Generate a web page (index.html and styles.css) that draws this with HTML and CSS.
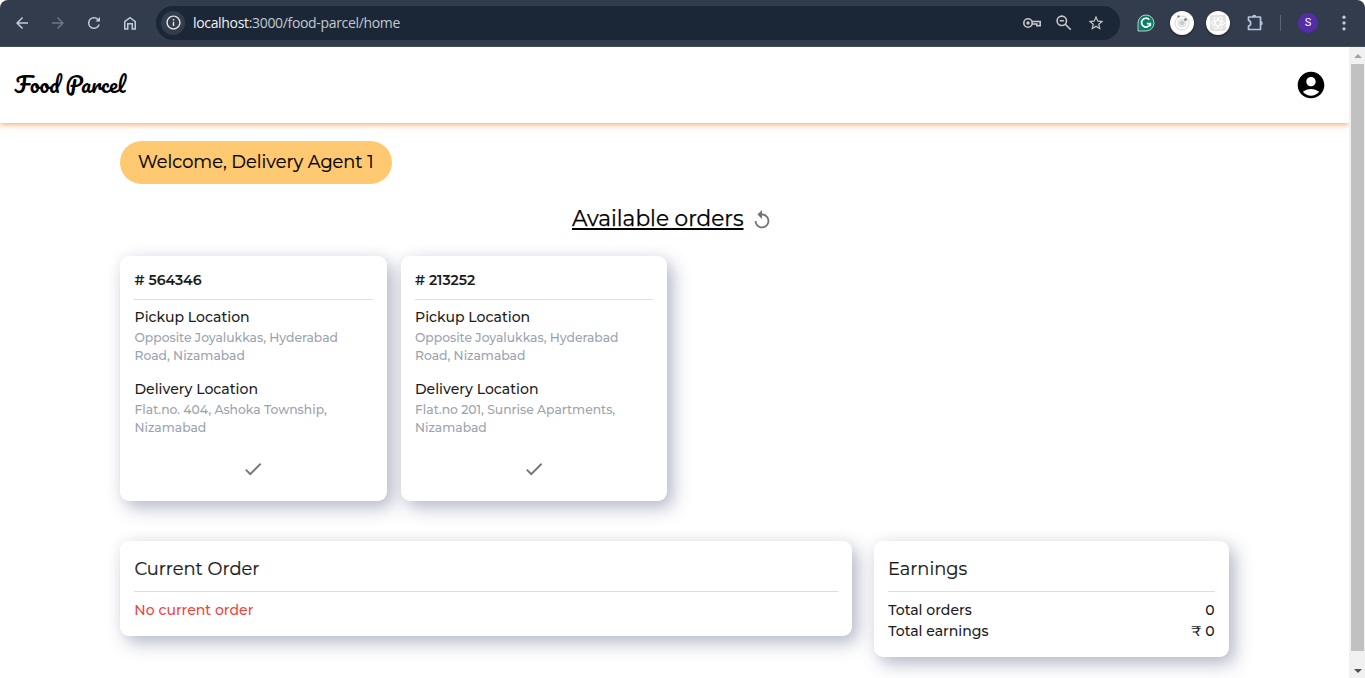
FILE: index.html
```html
<!DOCTYPE html>
<html lang="en">
<head>
<meta charset="utf-8">
<title>Food Parcel</title>
<link rel="stylesheet" href="styles.css">
</head>
<body>
<div class="toolbar">
  <nav class="nav-icons">
    <svg viewBox="0 0 24 24"><path d="M20 11H7.83l5.59-5.59L12 4l-8 8 8 8 1.41-1.41L7.83 13H20z"/></svg>
    <svg class="dim" viewBox="0 0 24 24"><path d="M12 4l-1.41 1.41L16.17 11H4v2h12.17l-5.58 5.59L12 20l8-8z"/></svg>
    <svg viewBox="0 0 24 24"><path d="M17.65 6.35A7.96 7.96 0 0 0 12 4a8 8 0 1 0 7.73 10h-2.08A6 6 0 1 1 12 6c1.66 0 3.14.69 4.22 1.78L14 10h6V4z"/></svg>
    <svg viewBox="0 0 24 24"><path d="M4 21V9.5L12 3.5l8 6V21h-6v-7h-4v7zM6 19h2v-7h8v7h2v-8.500L12 6l-6 4.500z"/></svg>
  </nav>
  <div class="address">
    <span class="info"><svg viewBox="0 0 24 24"><path d="M11 7h2v2h-2zm0 4h2v6h-2zm1-9C6.480 2 2 6.480 2 12s4.480 10 10 10 10-4.480 10-10S17.520 2 12 2zm0 18c-4.410 0-8-3.590-8-8s3.590-8 8-8 8 3.590 8 8-3.590 8-8 8z"/></svg></span>
    <span class="url"><b>localhost</b>:3000/food-parcel/home</span>
    <span class="address-icons">
      <svg viewBox="0 0 20 20" class="line"><circle cx="6" cy="10" r="4.200"/><circle class="dot" cx="6" cy="10" r="1.700"/><path d="M10 8.500h8.200v4.200h-3.400v-1.700H10"/></svg>
      <svg viewBox="0 0 20 20" class="line"><circle cx="7.800" cy="7.800" r="4.700"/><path d="M11.300 11.300l5.500 5.500M5.700 7.800h4.200"/></svg>
      <svg viewBox="0 0 24 24"><path d="M22 9.240l-7.190-.62L12 2 9.190 8.630 2 9.240l5.460 4.730L5.820 21 12 17.270 18.180 21l-1.630-7.030zM12 15.400l-3.760 2.270 1-4.280-3.320-2.880 4.380-.38L12 6.100l1.710 4.040 4.380.38-3.320 2.880 1 4.280z"/></svg>
    </span>
  </div>
  <div class="extensions">
    <svg class="grammar" viewBox="0 0 18 18"><path class="leaf" d="M1 17V9a8 8 0 1 1 8 8z"/><path class="g" d="M12.300 5.700A4.400 4.400 0 1 0 13.300 9.600H9.800M13.300 9.600v2.700"/></svg>
    <span class="disc"><svg viewBox="0 0 24 24" class="orbit"><circle cx="12" cy="12" r="7"/><circle cx="12" cy="12" r="4"/><circle class="core" cx="12" cy="12" r="2.300"/><circle class="moon" cx="8.500" cy="5.500" r="1.200"/><circle class="moon" cx="15.500" cy="8.500" r="1.500"/></svg></span>
    <span class="disc"><svg viewBox="0 0 24 24" class="atom"><rect x="4" y="4" width="16" height="16" rx="2"/><ellipse cx="12" cy="12" rx="6.500" ry="2.600"/><ellipse cx="12" cy="12" rx="6.500" ry="2.600" transform="rotate(60 12 12)"/><ellipse cx="12" cy="12" rx="6.500" ry="2.600" transform="rotate(120 12 12)"/></svg></span>
    <svg class="puzzle" viewBox="0 0 20 20"><path class="tab" d="M7 4a2.200 2.200 0 0 1 4.400 0zM15.500 8a2.200 2.200 0 0 1 0 4.400z"/><path d="M3.500 4h12v12.500h-12v-3.300c2.900-.6 2.900-5.300 0-5.900z"/></svg>
    <span class="separator"></span>
    <span class="profile">S</span>
    <svg class="more" viewBox="0 0 24 24"><circle cx="12" cy="5" r="2"/><circle cx="12" cy="12" r="2"/><circle cx="12" cy="19" r="2"/></svg>
  </div>
</div>
<div class="viewport">
  <div class="page">
    <header class="header">
      <div class="logo">Food Parcel</div>
      <svg class="account" viewBox="0 0 24 24"><path d="M12 2C6.480 2 2 6.480 2 12s4.480 10 10 10 10-4.480 10-10S17.520 2 12 2zm0 4c1.930 0 3.500 1.570 3.500 3.500S13.930 13 12 13s-3.500-1.570-3.500-3.500S10.070 6 12 6zm0 14c-2.030 0-4.430-.82-6.140-2.880C7.550 15.800 9.680 15 12 15s4.450.8 6.140 2.120C16.430 19.180 14.030 20 12 20z"/></svg>
    </header>
    <main class="content">
      <div class="welcome">Welcome, Delivery Agent 1</div>
      <div class="heading">
        <h1>Available orders</h1>
        <svg viewBox="0 0 24 24"><path d="M12 5V1L7 6l5 5V7c3.310 0 6 2.690 6 6s-2.690 6-6 6-6-2.690-6-6H4c0 4.420 3.580 8 8 8s8-3.580 8-8-3.580-8-8-8z"/></svg>
      </div>
      <section class="orders">
        <article class="card order">
          <h2># 564346</h2>
          <h3>Pickup Location</h3>
          <p>Opposite Joyalukkas, Hyderabad<br>Road, Nizamabad</p>
          <h3>Delivery Location</h3>
          <p>Flat.no. 404, Ashoka Township,<br>Nizamabad</p>
          <svg class="check" viewBox="0 0 24 24"><path d="M9 16.170 4.830 12l-1.420 1.410L9 19 21 7l-1.410-1.410z"/></svg>
        </article>
        <article class="card order">
          <h2># 213252</h2>
          <h3>Pickup Location</h3>
          <p>Opposite Joyalukkas, Hyderabad<br>Road, Nizamabad</p>
          <h3>Delivery Location</h3>
          <p>Flat.no 201, Sunrise Apartments,<br>Nizamabad</p>
          <svg class="check" viewBox="0 0 24 24"><path d="M9 16.170 4.830 12l-1.420 1.410L9 19 21 7l-1.410-1.410z"/></svg>
        </article>
      </section>
      <section class="summary">
        <article class="card panel">
          <h2>Current Order</h2>
          <div class="row empty">No current order</div>
        </article>
        <article class="card panel">
          <h2>Earnings</h2>
          <div class="row"><span>Total orders</span><span>0</span></div>
          <div class="row"><span>Total earnings</span><span>₹ 0</span></div>
        </article>
      </section>
    </main>
  </div>
  <div class="scrollbar"><i class="up"></i><i class="thumb"></i><i class="down"></i></div>
</div>
</body>
</html>
```

FILE: styles.css
```css
* { box-sizing: border-box; }
body { margin: 0; height: 678px; overflow: hidden; background: #fff; font-family: Montserrat, Inter, "Liberation Sans", sans-serif; font-weight: 400; color: #1c1c1c; }
h1, h2, h3, p { margin: 0; font-weight: 400; white-space: nowrap; }
svg { display: block; flex: none; }

/* Browser toolbar */
.toolbar { height: 47px; display: flex; align-items: center; padding: 0 11px 1px 12px; background: #323c4d; border-bottom: 1px solid #434c58; border-radius: 8px 8px 0 0; }
.nav-icons { display: flex; gap: 18px; padding-left: 1px; }
.nav-icons svg { width: 18px; height: 18px; fill: #c0cbdd; }
.nav-icons .dim { fill: #6c7687; }
.address { width: 964px; flex: none; height: 34px; margin-left: 17px; padding: 0 14px 0 5px; display: flex; align-items: center; border-radius: 17px; background: #1b2736; }
.info { width: 24px; height: 24px; display: grid; place-items: center; border-radius: 50%; background: #323c4d; }
.info svg { width: 17px; height: 17px; fill: #e4e7ec; }
.url { margin-left: 8px; font: 14px/20px "Open Sans", "Noto Sans", sans-serif; color: #c3c8d0; letter-spacing: -.33px; }
.url b { font-weight: 400; color: #f0f2f5; }
.address-icons { margin-left: auto; display: flex; gap: 12px; }
.address-icons svg { width: 20px; height: 20px; fill: #c7c7c7; }
.address-icons svg:last-child { width: 18px; height: 18px; margin: 1px; }
.address-icons .line { fill: none; stroke: #c7c7c7; stroke-width: 1.6; }
.address-icons .dot { fill: #c7c7c7; stroke: none; }
.extensions { display: flex; align-items: center; margin-left: 17px; }
.grammar { width: 18px; height: 18px; margin-right: 15px; }
.leaf { fill: #087f67; stroke: #b9cbc9; stroke-width: 1; }
.g { fill: none; stroke: #fff; stroke-width: 1.7; }
.disc { width: 24px; height: 24px; margin-right: 12px; border-radius: 50%; background: #fff; box-shadow: 0 1px 2px rgba(0,0,0,.5); }
.orbit { fill: none; stroke: #ccc; stroke-width: .8; }
.orbit .core { fill: #ccc; }
.orbit .moon { fill: #888; stroke: none; }
.atom { fill: none; stroke: #fff; stroke-width: .9; }
.atom rect { fill: #e3e3e3; stroke: none; }
.puzzle { width: 20px; height: 20px; fill: none; stroke: #b5c3dc; stroke-width: 1.7; stroke-linejoin: round; margin-left: 3px; }
.puzzle .tab { fill: #b5c3dc; stroke: none; }
.separator { width: 1px; height: 16px; margin: 0 17px 0 15px; background: #5b6574; }
.profile { width: 20px; height: 20px; border-radius: 50%; background: #512da8; color: #fff; font: 11px/20px Roboto, sans-serif; text-align: center; }
.more { width: 20px; height: 20px; margin-left: 16px; fill: #c0cbdd; }

/* Page */
.viewport { height: 631px; display: flex; }
.page { width: 1349px; overflow: hidden; }
.header { height: 76px; padding: 0 22px 0 14.500px; display: flex; align-items: center; justify-content: space-between; box-shadow: 0 1px 6px rgba(250,125,45,.8); }
.logo { color: #000; font: 400 21.600px/30px Pacifico, "Liberation Serif", serif; padding-bottom: 2px; }
.account { width: 32px; height: 32px; }
.content { padding: 18px 120px 0; }
.welcome { width: 272px; height: 43px; padding-left: 18px; border-radius: 22px; background: #ffc971; color: #000; font-size: 17.800px; line-height: 42px; white-space: nowrap; -webkit-text-stroke: .2px #000; }
.heading { height: 72px; display: flex; justify-content: center; align-items: center; gap: 7.500px; padding-right: 4px; color: #000; }
.heading h1 { font-size: 21.650px; line-height: 28px; margin-bottom: 4px; text-decoration: underline; text-decoration-thickness: 2px; text-underline-offset: 2px; -webkit-text-stroke: .25px #000; }
.heading svg { width: 22px; height: 22px; fill: #757575; }
.card { background: #fff; border-radius: 9px; padding: 14px; box-shadow: 6px 7px 18px rgba(50,62,105,.34), 0 0 14px rgba(50,62,105,.05); }
.orders { display: grid; grid-template-columns: repeat(4, 266.500px); gap: 14px; }
.order { height: 245px; display: flex; flex-direction: column; }
.order h2 { height: 30px; margin-bottom: 7px; font-size: 14.100px; line-height: 21px; font-weight: 600; text-indent: .5px; border-bottom: 1px solid #dedede; }
.order h3 { font-size: 14.050px; font-weight: 500; line-height: 21px; text-indent: .5px; }
.order p { height: 36px; margin: 1px 0 14px; padding-left: .5px; font-size: 12.330px; line-height: 18px; font-weight: 500; color: #9ca3af; }
.check { width: 22px; height: 22px; margin: 7px auto 0; fill: #757575; }
.summary { display: grid; grid-template-columns: 732px 355px; gap: 22px; align-items: start; margin-top: 40px; }
.panel { padding-bottom: 15px; }
.panel h2 { height: 37px; margin-bottom: 8px; font-size: 17.850px; line-height: 28px; text-indent: .5px; border-bottom: 1px solid #dedede; -webkit-text-stroke: .2px #1c1c1c; }
.panel + .panel h2 { text-indent: 0; }
.row { display: flex; justify-content: space-between; padding: 0 .5px 0 .3px; font-size: 14.050px; font-weight: 500; line-height: 21px; }
.empty { color: #ef4444; }

/* Scrollbar */
.scrollbar { width: 16px; display: flex; flex-direction: column; align-items: center; background: #f1f1f1; padding-left: 1px; }
.up, .down { border: 4px solid transparent; width: 0; }
.up { border-top: 0; border-bottom-color: #a3a3a3; margin: 7px 0 6px; }
.thumb { width: 13px; height: 587px; background: #c1c1c1; }
.down { border-bottom: 0; border-top-color: #505050; margin-top: 18px; }
```
